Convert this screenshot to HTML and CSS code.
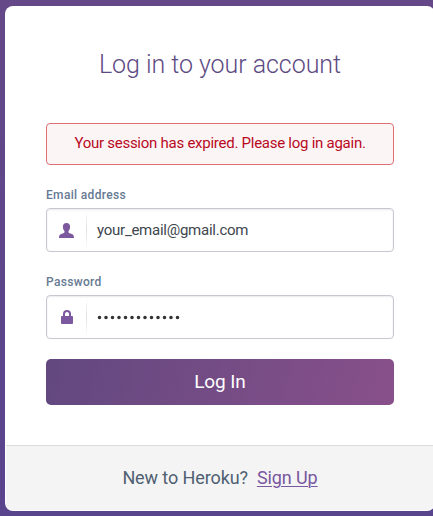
FILE: index.html
```html
<!DOCTYPE html>
<html lang="en">
<head>
<meta charset="utf-8">
<title>Log in</title>
<link rel="stylesheet" href="styles.css">
</head>
<body>
<main class="panel">
  <form class="content">
    <h1 class="title">Log in to your account</h1>
    <div class="alert"><span>Your session has expired. Please log in again.</span></div>
    <label class="label label-email" for="email"><span>Email address</span></label>
    <div class="field">
      <span class="icon"><svg width="15" height="15" viewBox="0 0 15 15"><path d="M7.500 0C5.200 0 3.900 1.500 3.900 3.600C3.900 5.500 4.600 7.200 5.500 8.100V9.300C5.300 10.300 4 10.500 2.200 11C.700 11.500 0 12.500 0 15H15C15 12.500 14.300 11.500 12.800 11C11 10.500 9.700 10.300 9.500 9.300V8.100C10.400 7.200 11.100 5.500 11.100 3.600C11.100 1.500 9.800 0 7.500 0Z"/></svg></span>
      <span class="value" id="email">your_email@gmail.com</span>
    </div>
    <label class="label label-password" for="password"><span>Password</span></label>
    <div class="field">
      <span class="icon"><svg width="12" height="14" viewBox="0 0 12 14"><path fill-rule="evenodd" d="M2 6V4A4 4 0 0 1 10 4V6H11Q12 6 12 7V13Q12 14 11 14H1Q0 14 0 13V7Q0 6 1 6ZM4 6H8V4A2 2 0 0 0 4 4Z"/></svg></span>
      <svg class="dots" id="password" width="84" height="5" viewBox="0 0 84 5"><path d="M2.500 2.500H83"/></svg>
    </div>
    <button class="submit" type="button"><span>Log In</span></button>
  </form>
  <footer class="footer"><span class="question">New to Heroku?</span><a class="signup" href="#">Sign Up</a></footer>
</main>
</body>
</html>
```
FILE: styles.css
```css
* { box-sizing: border-box; }
html { height: 100%; overflow: hidden; }
body {
  margin: 0;
  height: 516px;
  padding: 6px 0 0 5px;
  overflow: hidden;
  background: linear-gradient(#644888, #59448e);
  font-family: Roboto, "Liberation Sans", sans-serif;
}
.panel {
  display: flex;
  flex-direction: column;
  width: 430px;
  height: 505px;
  padding: 0 1px 1px;
  background: #fff;
  border-radius: 8px;
}
.content { flex: 1; padding: 41px 40px 0; }
.title {
  margin: 0;
  height: 36px;
  line-height: 36px;
  font-size: 25px;
  font-weight: 300;
  letter-spacing: -.05px;
  text-align: center;
  color: #5d4b83;
}
.alert {
  margin-top: 40px;
  height: 42px;
  line-height: 39px;
  border: 1px solid #df6f73;
  border-radius: 4px;
  background: #fcf5f6;
  color: #b8091e;
  font-size: 15px;
  letter-spacing: -.26px;
  text-align: center;
  white-space: nowrap;
}
.label {
  display: block;
  height: 14px;
  line-height: 14px;
  margin: 23px 0 6px;
  color: #667a92;
  font-size: 12px;
  font-weight: 500;
  letter-spacing: .33px;
}
.field {
  display: flex;
  align-items: center;
  height: 44px;
  border: 1px solid #c7c7d1;
  border-radius: 4px;
  background: #fff;
  box-shadow: inset 0 1px 2px #e9e9ee;
}
.icon {
  display: flex;
  align-items: center;
  justify-content: center;
  width: 40px;
  height: 36px;
  border-right: 1px solid;
  border-image: linear-gradient(#fff, #dfdfe4 50%, #fff) 1;
}
.icon svg { fill: #7c589f; }
.value { margin-left: 10px; color: #3d464d; font-size: 15px; letter-spacing: -.25px; }
.dots { margin-left: 10px; }
.dots path { stroke: #333; stroke-width: 3.600; stroke-linecap: round; stroke-dasharray: 0 6.500; }
.submit {
  display: block;
  width: 100%;
  height: 46px;
  margin-top: 20px;
  padding: 0 0 1px;
  border: 0;
  border-radius: 5px;
  background: linear-gradient(105deg, #62487f, #88508b);
  color: #fff;
  font: 400 19px Roboto, sans-serif;
  letter-spacing: -.1px;
}
.footer {
  display: flex;
  align-items: center;
  justify-content: center;
  gap: 9px;
  height: 65px;
  padding-bottom: 1px;
  border-top: 1px solid #dcdcdc;
  border-radius: 0 0 7px 7px;
  background: #f4f4f4;
  font-size: 18px;
  letter-spacing: -.1px;
}
.question { color: #4f6072; }
.signup { color: #79589f; text-decoration-thickness: 1px; text-underline-offset: 2px; }
```
